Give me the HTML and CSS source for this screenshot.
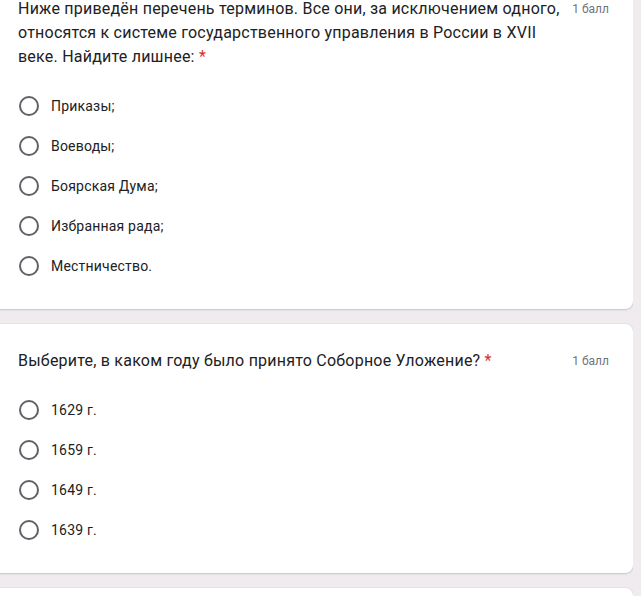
FILE: index.html
```html
<!DOCTYPE html>
<html lang="ru">
<head>
<meta charset="utf-8">
<link rel="stylesheet" href="styles.css">
</head>
<body>
<div class="page">
  <div class="card card-first">
    <div class="q-head">
      <div class="q-title">Ниже приведён перечень терминов. Все они, за исключением одного, относятся к системе государственного управления в России в XVII веке. Найдите лишнее:&nbsp;<span class="req">*</span></div>
      <div class="points">1 балл</div>
    </div>
    <div class="options">
      <div class="opt"><span class="radio"></span><span class="label">Приказы;</span></div>
      <div class="opt"><span class="radio"></span><span class="label">Воеводы;</span></div>
      <div class="opt"><span class="radio"></span><span class="label">Боярская Дума;</span></div>
      <div class="opt"><span class="radio"></span><span class="label">Избранная рада;</span></div>
      <div class="opt"><span class="radio"></span><span class="label">Местничество.</span></div>
    </div>
  </div>
  <div class="card">
    <div class="q-head">
      <div class="q-title">Выберите, в каком году было принято Соборное Уложение?&nbsp;<span class="req">*</span></div>
      <div class="points">1 балл</div>
    </div>
    <div class="options">
      <div class="opt"><span class="radio"></span><span class="label">1629 г.</span></div>
      <div class="opt"><span class="radio"></span><span class="label">1659 г.</span></div>
      <div class="opt"><span class="radio"></span><span class="label">1649 г.</span></div>
      <div class="opt"><span class="radio"></span><span class="label">1639 г.</span></div>
    </div>
  </div>
  <div class="card card-last"></div>
</div>
</body>
</html>
```
FILE: styles.css
```css
html, body {
  margin: 0;
  padding: 0;
  background: #efebee;
  overflow: hidden;
}
body {
  font-family: Roboto, "Liberation Sans", Arial, sans-serif;
  color: #202124;
}
.page {
  width: 633px;
  height: 596px;
  overflow: hidden;
  display: flex;
  flex-direction: column;
  gap: 15px;
}
.card {
  background: #fff;
  border-radius: 0 8px 8px 0;
  box-shadow: 0 1px 2px rgba(60, 64, 67, 0.18), 0 0 0 1px #e6e2e5;
  padding: 25px 24px 23px 18px;
  flex: none;
}
.card-first {
  margin-top: -28px;
}
.card-last {
  height: 60px;
}
.q-head {
  display: flex;
  align-items: flex-start;
}
.q-title {
  flex: 1;
  font-size: 16px;
  line-height: 24px;
  letter-spacing: 0.22px;
}
.req {
  color: #d93025;
}
.points {
  margin-left: 8px;
  font-size: 12px;
  line-height: 24px;
  color: #70757a;
  white-space: nowrap;
}
.options {
  margin-top: 17px;
  display: flex;
  flex-direction: column;
}
.opt {
  height: 40px;
  display: flex;
  align-items: center;
}
.radio {
  width: 16px;
  height: 16px;
  border: 2px solid #5f6368;
  border-radius: 50%;
  margin-left: 1px;
  margin-right: 12px;
  flex: none;
}
.label {
  font-size: 14px;
  line-height: 20px;
  letter-spacing: 0.2px;
}
```
